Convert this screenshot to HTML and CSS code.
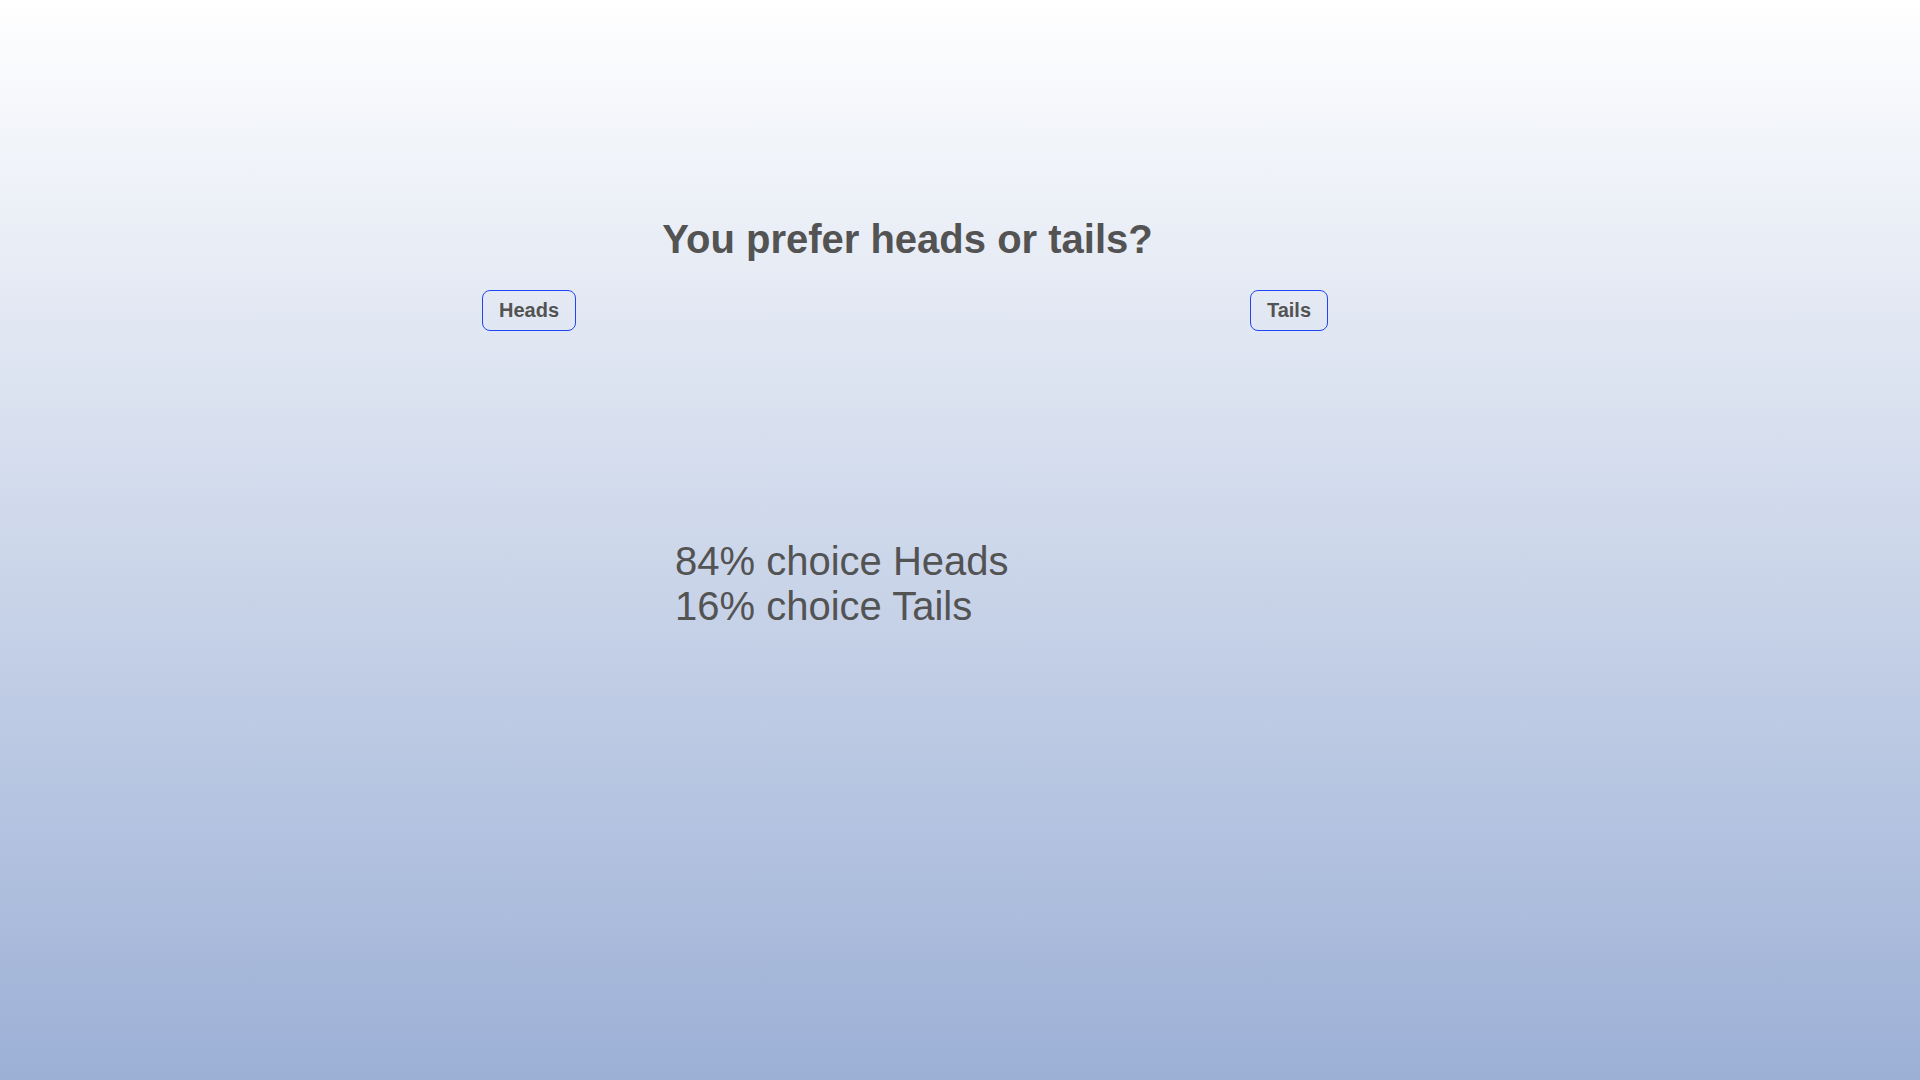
FILE: index.html
```html
<!DOCTYPE html>
<html lang="en">
<head>
<meta charset="utf-8">
<title>Heads or tails</title>
<link rel="stylesheet" href="styles.css">
</head>
<body>
<main class="poll">
  <h1 class="poll-title">You prefer heads or tails?</h1>
  <div class="poll-choices">
    <button class="choice-btn" type="button">Heads</button>
    <button class="choice-btn" type="button">Tails</button>
  </div>
  <div class="poll-results">
    <div class="result-line">84% choice Heads</div>
    <div class="result-line">16% choice Tails</div>
  </div>
</main>
</body>
</html>
```
FILE: styles.css
```css
html, body {
  margin: 0;
  padding: 0;
}
body {
  min-height: 100vh;
  background: linear-gradient(to bottom, #ffffff 0%, #9cb0d6 100%);
  font-family: "Liberation Sans", Arial, sans-serif;
  color: #535353;
}
.poll {
  box-sizing: border-box;
  width: 846px;
  margin-left: 482px;
  padding-top: 216px;
}
.poll-title {
  margin: 0;
  padding-left: 5px;
  font-size: 40px;
  line-height: 46px;
  font-weight: bold;
  text-align: center;
}
.poll-choices {
  display: flex;
  justify-content: space-between;
  margin-top: 28px;
}
.choice-btn {
  font-family: "Liberation Sans", Arial, sans-serif;
  font-size: 20px;
  font-weight: bold;
  line-height: 23px;
  color: #535353;
  background: transparent;
  border: 1px solid #1f45f6;
  border-radius: 8px;
  padding: 8px 16px;
  cursor: pointer;
}
.poll-results {
  margin-top: 208px;
  padding-left: 193px;
  font-size: 40px;
  line-height: 45px;
}
```
